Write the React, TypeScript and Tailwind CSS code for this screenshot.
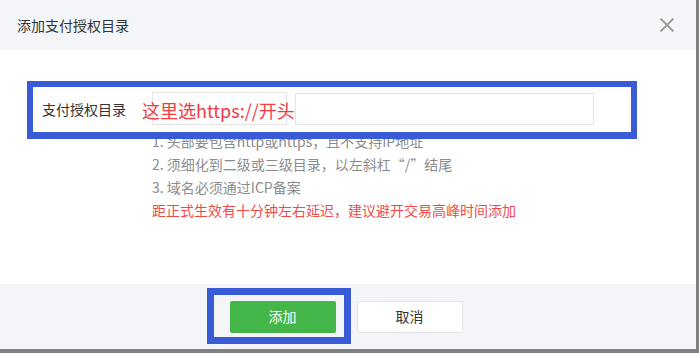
import React from "react";

const font = { fontFamily: '"Microsoft YaHei", "Noto Sans CJK SC", "Noto Sans", sans-serif' };

export default function App() {
  return (
    <div className="w-[699px] h-[353px] bg-[#808080] overflow-hidden" style={font}>
      <div className="relative w-[696px] h-[349px] flex flex-col bg-white">
        <div className="h-[50px] shrink-0 bg-[#f4f5f9] flex items-center justify-between pl-[17px] pr-[21px]">
          <span className="text-[14px] leading-[20px] text-[#333]">添加支付授权目录</span>
          <svg width="16" height="16" viewBox="0 0 16 16" className="block">
            <path d="M1.5 1.5 L14.5 14.5 M14.5 1.5 L1.5 14.5" stroke="#9a9a9a" strokeWidth="1.8" fill="none" />
          </svg>
        </div>
        <div className="flex-1 bg-white pt-[42px]">
          <div className="flex items-center h-[33px]">
            <div className="w-[152px] pl-[42px] text-[14px] text-[#333] leading-[20px]">支付授权目录</div>
            <div className="w-[135px] h-[33px] border border-[#e4e4e4]" />
            <div className="w-[299px] h-[32px] border border-[#e4e4e4] ml-[8px]" />
          </div>
          <div className="pl-[152px] mt-[5px] text-[14px] leading-[23px]">
            <div className="text-[#8c8c8c]">1. 头部要包含http或https，且不支持IP地址</div>
            <div className="text-[#8c8c8c]">2. 须细化到二级或三级目录，以左斜杠“/”结尾</div>
            <div className="text-[#8c8c8c]">3. 域名必须通过ICP备案</div>
            <div className="text-[#ef4b4b]">距正式生效有十分钟左右延迟，建议避开交易高峰时间添加</div>
          </div>
        </div>
        <div className="h-[65px] shrink-0 bg-[#f4f5f9] flex items-center justify-center gap-[21px] pr-[4px]">
          <button className="w-[106px] h-[32px] rounded-[2px] bg-[#44b549] text-white text-[14px]">添加</button>
          <button className="w-[106px] h-[32px] rounded-[2px] bg-white border border-[#e1e2e6] text-[#333] text-[14px]">取消</button>
        </div>

        <div className="absolute left-[27px] top-[81px] w-[610px] h-[58px] border-[6px] border-b-[7px] border-[#3a5bd6]" />
        <div className="absolute left-[142px] top-[97px] text-[18px] leading-[26px] text-[#f4393f] whitespace-nowrap">这里选https://开头</div>
        <div className="absolute left-[207px] top-[288px] w-[144px] h-[56px] border-[7px] border-[#3a5bd6]" />
      </div>
    </div>
  );
}
